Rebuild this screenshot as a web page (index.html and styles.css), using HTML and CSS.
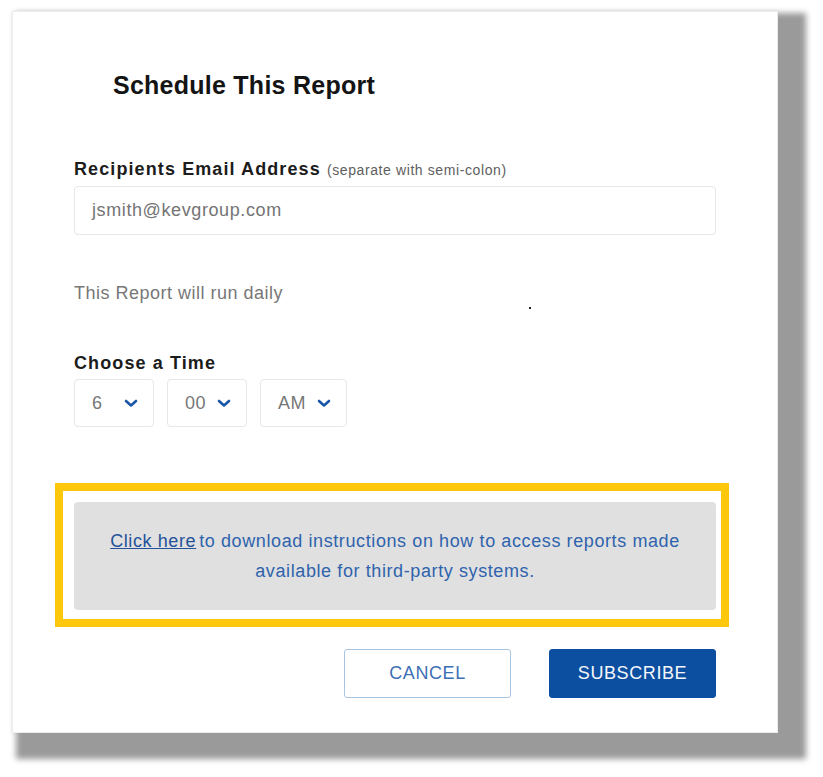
FILE: index.html
```html
<!DOCTYPE html>
<html lang="en">
<head>
<meta charset="utf-8">
<title>Schedule This Report</title>
<link rel="stylesheet" href="styles.css">
</head>
<body>
<div class="card">
  <h1 class="title">Schedule This Report</h1>

  <div class="field-label">Recipients Email Address <span class="hint">(separate with semi-colon)</span></div>
  <div class="input">jsmith@kevgroup.com</div>

  <div class="daily-row">
    <span class="daily">This Report will run daily</span>
    <span class="dot"></span>
  </div>

  <div class="field-label time-label">Choose a Time</div>
  <div class="selects">
    <div class="select sel-h"><span>6</span><svg class="chev" width="14" height="9" viewBox="0 0 14 9"><polyline points="2,2 7,6.5 12,2"/></svg></div>
    <div class="select sel-m"><span>00</span><svg class="chev" width="14" height="9" viewBox="0 0 14 9"><polyline points="2,2 7,6.5 12,2"/></svg></div>
    <div class="select sel-p"><span>AM</span><svg class="chev" width="14" height="9" viewBox="0 0 14 9"><polyline points="2,2 7,6.5 12,2"/></svg></div>
  </div>

  <div class="highlight">
    <div class="notice">
      <a class="notice-link" href="#">Click here</a><span class="notice-text">to download instructions on how to access reports made available for third-party systems.</span>
    </div>
  </div>

  <div class="actions">
    <button class="btn btn-cancel">CANCEL</button>
    <button class="btn btn-primary">SUBSCRIBE</button>
  </div>
</div>
</body>
</html>
```

FILE: styles.css
```css
html, body {
  margin: 0;
  padding: 0;
  background: #ffffff;
}

body {
  font-family: "Liberation Sans", Arial, sans-serif;
  padding: 11px 0 44px 12px;
}

.card {
  width: 766px;
  box-sizing: border-box;
  background: #ffffff;
  border: 1px solid #ececec;
  box-shadow: 16px 14px 6px 12px #9a9a9a, 0 0 4px rgba(0, 0, 0, 0.08);
  padding: 58px 61px 34px 61px;
  display: flex;
  flex-direction: column;
}

.title {
  margin: 0 0 58px 39px;
  font-size: 25px;
  line-height: 30px;
  font-weight: bold;
  color: #141414;
  letter-spacing: 0.25px;
}

.field-label {
  font-size: 18px;
  line-height: 22px;
  font-weight: bold;
  color: #1c1c1c;
  letter-spacing: 1.1px;
}

.hint {
  font-size: 14px;
  font-weight: normal;
  color: #5e5e5e;
  letter-spacing: 0.6px;
}

.input {
  margin-top: 5px;
  height: 49px;
  box-sizing: border-box;
  border: 1px solid #e6e6e6;
  border-radius: 4px;
  padding: 0 17px;
  display: flex;
  align-items: center;
  font-size: 18px;
  color: #747474;
  letter-spacing: 0.6px;
}

.daily-row {
  margin-top: 47px;
  display: flex;
  align-items: flex-end;
}

.daily {
  font-size: 18px;
  line-height: 22px;
  color: #777777;
  letter-spacing: 0.5px;
}

.dot {
  width: 2px;
  height: 2px;
  background: #222;
  margin-left: 246px;
  margin-bottom: -5px;
}

.time-label {
  margin-top: 48px;
}

.selects {
  margin-top: 5px;
  display: flex;
  gap: 13px;
}

.select {
  height: 48px;
  box-sizing: border-box;
  border: 1px solid #e7e7e7;
  border-radius: 4px;
  display: flex;
  align-items: center;
  justify-content: space-between;
  padding: 0 15px 0 17px;
  font-size: 18px;
  color: #777777;
  letter-spacing: 0.5px;
}

.sel-h { width: 80px; }
.sel-m { width: 80px; }
.sel-p { width: 87px; }

.chev polyline {
  fill: none;
  stroke: #1a57a7;
  stroke-width: 2.6;
  stroke-linecap: round;
  stroke-linejoin: round;
}

.highlight {
  margin: 56px -13px 0 -19px;
  border: 8px solid #fdc70c;
  padding: 11px 5px 9px 11px;
}

.notice {
  background: #e0e0e0;
  border-radius: 4px;
  padding: 24px 20px;
  text-align: center;
  font-size: 18px;
  line-height: 30px;
  color: #2f63ad;
  letter-spacing: 0.6px;
}

.notice-link {
  color: #24529a;
  text-decoration: underline;
  margin-right: 3px;
}

.actions {
  margin-top: 22px;
  display: flex;
  justify-content: flex-end;
  gap: 38px;
}

.btn {
  height: 49px;
  width: 167px;
  box-sizing: border-box;
  border-radius: 3px;
  font-family: "Liberation Sans", Arial, sans-serif;
  font-size: 18px;
  letter-spacing: 0.6px;
  cursor: pointer;
}

.btn-cancel {
  background: #ffffff;
  border: 1.5px solid #a9c5e6;
  color: #3d6fb4;
}

.btn-primary {
  background: #0c4fa1;
  border: 1px solid #0c4fa1;
  color: #f4f6fa;
}
```
